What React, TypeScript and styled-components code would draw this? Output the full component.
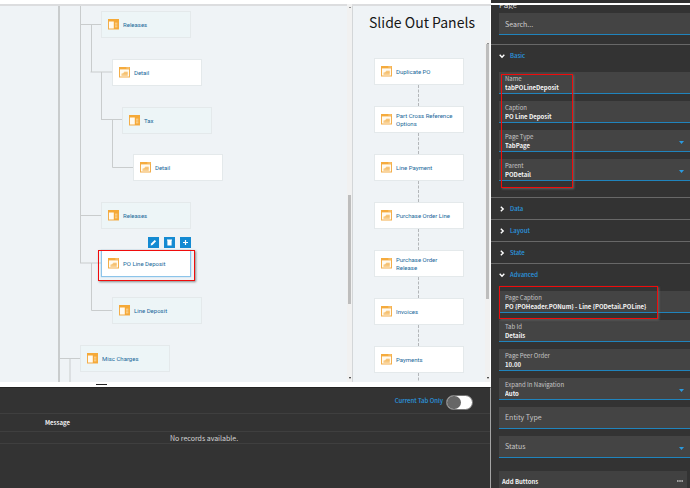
import React, { useState } from "react";
import styled, { createGlobalStyle, css } from "styled-components";

const sans = `"Noto Sans CJK SC", "Noto Sans", sans-serif`;

const GlobalStyle = createGlobalStyle`
  *, *::before, *::after { box-sizing: border-box; }
  body { margin: 0; background: #333; font-family: ${sans}; }
  button, input, select { font-family: inherit; }
`;

const Page = styled.div`
  display: flex;
  height: 100vh;
  overflow: hidden;
`;

const Main = styled.main`
  display: flex;
  flex: 1;
  flex-direction: column;
  min-width: 0;
`;

const Workspace = styled.div`
  display: flex;
  flex: 1;
  min-height: 0;
  border-top: 4px solid #fff;
  border-bottom: 5px solid #fff;
  background: #eff3f6;
  box-shadow: inset 0 2px 0 #dcdddf;
`;

const TreePane = styled.section`
  position: relative;
  flex: 1;
  min-width: 0;
  margin-top: 2px;
  overflow: hidden;
  background: #eff3f6;
`;

const Connectors = styled.svg`
  position: absolute;
  inset: 0;
`;

const Card = styled.a<{ $tint?: boolean; $selected?: boolean }>`
  display: flex;
  align-items: center;
  gap: 4px;
  width: 90px;
  height: 27px;
  padding: 0 5px 0 6px;
  border: 1px solid #e4e9eb;
  background: ${(p) => (p.$tint ? "#edf5f7" : "#fff")};
  color: #20699a;
  font: 400 6px/8px Roboto, sans-serif;
  text-decoration: none;
  ${(p) =>
    p.$selected &&
    css`
      border-color: #8cc4ea;
      box-shadow: 0 0 1px #8cc4ea;
    `}
  svg {
    flex: none;
  }
`;

const TreeNode = styled.div<{ $x: number; $y: number }>`
  position: absolute;
  left: ${(p) => p.$x}px;
  top: ${(p) => p.$y}px;
`;

const NodeActions = styled.div`
  position: absolute;
  right: 0;
  bottom: 29px;
  display: flex;
  gap: 5px;
`;

const NodeButton = styled.button`
  display: grid;
  place-items: center;
  width: 11px;
  height: 11px;
  padding: 0;
  border: 0;
  background: #148ad2;
`;

const Highlight = styled.div<{ $top: number; $left: number; $width: number; $height: number }>`
  position: absolute;
  z-index: 2;
  top: ${(p) => p.$top}px;
  left: ${(p) => p.$left}px;
  width: ${(p) => p.$width}px;
  height: ${(p) => p.$height}px;
  border: 1px solid #f00c0c;
  box-shadow: 1px 1px 2px rgba(110, 110, 110, 0.8);
  pointer-events: none;
`;

const ScrollTrack = styled.div`
  display: flex;
  flex: none;
  flex-direction: column;
  align-items: center;
  width: 5px;
  padding: 2px 0;
  background: #f1f1f1;
  &::before,
  &::after {
    content: "";
    border: 1px solid transparent;
  }
  &::before {
    border-bottom-color: #333;
  }
  &::after {
    border-top: 2px solid #222;
  }
`;

const ScrollThumb = styled.div<{ $size: number }>`
  width: 3px;
  flex: ${(p) => p.$size} 1 0;
  background: #bdbdbd;
`;

const Space = styled.div<{ $grow: number }>`
  flex: ${(p) => p.$grow} 1 0;
`;

const PanelsPane = styled.section`
  display: flex;
  flex: none;
  flex-direction: column;
  width: 139px;
  margin-top: 2px;
  border-left: 1px solid #d3d6d8;
  border-right: 1px solid #fff;
  overflow: hidden;
`;

const PanelsTitle = styled.h2`
  flex: none;
  margin: 0;
  padding: 4px 0 0 16px;
  height: 34px;
  color: #161616;
  font-size: 14px;
  font-weight: 400;
  line-height: 24px;
  white-space: nowrap;
`;

const PanelsBody = styled.div`
  display: flex;
  flex: 1;
  min-height: 0;
`;

const PanelList = styled.ul`
  display: flex;
  flex: 1;
  flex-direction: column;
  margin: 0;
  padding: 18px 0 0 21px;
  overflow: hidden;
  list-style: none;
`;

const PanelItem = styled.li`
  display: flex;
  flex: none;
  flex-direction: column;
  width: 90px;
`;

const Dash = styled.span`
  height: 21px;
  margin-left: 44px;
  border-left: 1px dashed #b3b6b9;
`;

const Console = styled.section`
  flex: none;
  height: 101px;
  border-top: 1px solid #242424;
  border-right: 1px solid #a5a5a5;
  background: #333;
  color: #d6d6d6;
`;

const ResizeGrip = styled.div`
  height: 0;
  margin-left: 96px;
  &::before {
    content: "";
    position: relative;
    top: -4px;
    display: block;
    width: 11px;
    height: 1px;
    background: #222;
  }
`;

const ConsoleBar = styled.div`
  display: flex;
  justify-content: flex-end;
  height: 25px;
  padding: 7px 17px 0 0;
`;

const ToggleLabel = styled.label`
  display: flex;
  gap: 3px;
  color: #2a9ae0;
  font-size: 6px;
  font-weight: 500;
  line-height: 12px;
`;

const Toggle = styled.input`
  appearance: none;
  display: flex;
  width: 27px;
  height: 15px;
  margin: 0;
  border: 1px solid #777;
  border-radius: 8px;
  background: #fff;
  &::before {
    content: "";
    width: 14px;
    height: 13px;
    border-radius: 7px;
    background: #666;
  }
  &:checked {
    justify-content: flex-end;
  }
`;

const MessageTable = styled.table`
  width: 100%;
  border-collapse: collapse;
  line-height: 10px;
  tr {
    border-top: 1px solid #3f3f3f;
  }
  th {
    height: 18px;
    padding: 0 0 0 45px;
    color: #f0f0f0;
    font-size: 6px;
    text-align: left;
  }
  td {
    height: 12px;
    padding: 0 82px 0 0;
    border-bottom: 1px solid #3f3f3f;
    font-size: 7px;
    text-align: center;
  }
`;

const Sidebar = styled.aside`
  display: flex;
  flex: none;
  flex-direction: column;
  width: 199px;
  overflow: hidden;
  border-top: 3px solid #303030;
  background: #333;
`;

const SidebarTitle = styled.div`
  display: flex;
  flex: none;
  align-items: flex-end;
  height: 6px;
  margin-bottom: 4px;
  padding-left: 8px;
  overflow: hidden;
  border-top: 2px solid #fff;
  color: #ddd;
  font-size: 8px;
  line-height: 9px;
`;

const SearchBox = styled.input`
  flex: none;
  height: 22px;
  margin: 0 0 9px 8px;
  padding: 0 6px;
  border: 0;
  border-bottom: 1px solid #2084bd;
  border-radius: 0;
  background: #444;
  color: #eee;
  font-size: 7px;
  &::placeholder {
    color: #d0d0d0;
  }
`;

const SectionHeader = styled.button`
  display: flex;
  flex: none;
  align-items: center;
  gap: 5px;
  width: 100%;
  height: 22px;
  padding: 0 0 0 8px;
  border: 0;
  border-top: 1px solid #686868;
  background: none;
  color: #2a9ae0;
  font-size: 6px;
  font-weight: 500;
  line-height: 10px;
`;

const Fields = styled.div<{ $padBottom: number }>`
  position: relative;
  display: flex;
  flex: none;
  flex-direction: column;
  gap: 7px;
  padding: 6px 0 ${(p) => p.$padBottom}px 8px;
`;

const Field = styled.label`
  display: flex;
  flex-direction: column;
  position: relative;
  height: 22px;
  padding: 3px 0 0 6px;
  border-bottom: 1px solid #2084bd;
  background: #444;
  color: #c6c6c6;
  font-size: 6px;
  line-height: 8px;
  > svg {
    position: absolute;
    right: 6px;
    top: 11px;
    pointer-events: none;
  }
`;

const control = css`
  appearance: none;
  display: block;
  width: 100%;
  height: 10px;
  margin: 0;
  padding: 0;
  border: 0;
  outline: 0;
  background: none;
  color: #f4f4f4;
  font-size: 6px;
  font-weight: 700;
  line-height: 10px;
`;

const TextInput = styled.input`
  ${control}
`;

const Select = styled.select`
  ${control}
`;

const EmptyName = styled.span`
  margin-top: 2px;
  height: 10px;
  font-size: 7px;
  line-height: 10px;
`;

const AddButtons = styled.button`
  display: flex;
  flex: none;
  align-items: center;
  justify-content: space-between;
  height: 20px;
  margin: 0 3px 0 8px;
  padding: 0 4px 0 3px;
  border: 0;
  background: #414141;
  color: #f0f0f0;
  font-size: 6px;
  font-weight: 700;
`;

const PageIcon = () => (
  <svg width="11" height="11" viewBox="0 0 11 11" aria-hidden="true">
    <rect x="0.5" y="0.5" width="10" height="9.5" fill="#fffaf0" stroke="#f3ae4b" />
    <path d="M0 0h11v2.4H0z" fill="#f5ab3d" />
    <path d="M7.6 1h1M9.3 1h1" stroke="#fff" strokeWidth="0.7" />
    <path d="M2.5 8.4V6.4l1.8-.4.7-1h3.7v3.4z" fill="#f8d08f" />
    <path d="M2.5 8.2h6.2M4.4 6.6h4.3M5.2 5.1h3.5" stroke="#f3b456" strokeWidth="0.6" />
  </svg>
);

const GridIcon = () => (
  <svg width="11" height="11" viewBox="0 0 11 11" aria-hidden="true">
    <rect x="0.5" y="0.5" width="10" height="9.5" fill="#fffaf0" stroke="#f3ae4b" />
    <path d="M0 0h11v2.6H0zM5.8 2h4.8v8H5.8z" fill="#f5a938" />
    <path d="M7 4.2h2.4M7 6h2.4M7 7.8h2.4" stroke="#fbd9a3" strokeWidth="1" />
  </svg>
);

const Chevron = ({ open }: { open?: boolean }) => (
  <svg width="6" height="6" viewBox="0 0 6 6" fill="none" stroke="#fff" strokeWidth="1.4" aria-hidden="true">
    <path d={open ? "M.7 1.8 3 4.2 5.3 1.8" : "M1.8.7 4.2 3 1.8 5.3"} />
  </svg>
);

const Caret = () => (
  <svg width="5" height="3" viewBox="0 0 5 3" aria-hidden="true">
    <path d="M0 0h5L2.5 3z" fill="#2a9ae0" />
  </svg>
);

type NodeData = { name: string; x: number; y: number; grid?: boolean; selected?: boolean };

const nodes: NodeData[] = [
  { name: "Releases", x: 101, y: 5, grid: true },
  { name: "Detail", x: 112, y: 53 },
  { name: "Tax", x: 122, y: 101, grid: true },
  { name: "Detail", x: 133, y: 148 },
  { name: "Releases", x: 101, y: 196, grid: true },
  { name: "PO Line Deposit", x: 101, y: 244, selected: true },
  { name: "Line Deposit", x: 112, y: 291, grid: true },
  { name: "Misc Charges", x: 80, y: 339, grid: true },
];

const panels = [
  "Duplicate PO",
  "Part Cross Reference Options",
  "Line Payment",
  "Purchase Order Line",
  "Purchase Order Release",
  "Invoices",
  "Payments",
];

type FieldData = { name: string; value?: string; select?: boolean };

const basicFields: FieldData[] = [
  { name: "Name", value: "tabPOLineDeposit" },
  { name: "Caption", value: "PO Line Deposit" },
  { name: "Page Type", value: "TabPage", select: true },
  { name: "Parent", value: "PODetail", select: true },
];

const advancedFields: FieldData[] = [
  { name: "Page Caption", value: "PO {POHeader.PONum} - Line {PODetail.POLine}" },
  { name: "Tab Id", value: "Details" },
  { name: "Page Peer Order", value: "10.00" },
  { name: "Expand In Navigation", value: "Auto", select: true },
  { name: "Entity Type" },
  { name: "Status", select: true },
];

const FieldRow = ({ name, value, select }: FieldData) => (
  <Field>
    {value ? name : <EmptyName>{name}</EmptyName>}
    {select ? (
      <Select defaultValue={value ?? ""}>
        <option value={value ?? ""}>{value ?? ""}</option>
      </Select>
    ) : (
      <TextInput defaultValue={value ?? ""} />
    )}
    {select && <Caret />}
  </Field>
);

const Scrollbar = ({ before, size, after }: { before: number; size: number; after: number }) => (
  <ScrollTrack>
    <Space $grow={before} />
    <ScrollThumb $size={size} />
    <Space $grow={after} />
  </ScrollTrack>
);

export default function App() {
  const [currentOnly, setCurrentOnly] = useState(false);
  return (
    <Page>
      <GlobalStyle />
      <Main>
        <Workspace>
          <TreePane>
            <Connectors width="100%" height="100%" fill="none" stroke="#c9cccd">
              <path d="M59 0V400" strokeWidth="2" />
              <path d="M80.5 0V257M80.5 18.5H101M91.5 18.5V66M90.5 66H112M101.5 66V113.5M101 113.5H122M112.5 113.5V161.5H133M80.5 209.5H101M80 257H101M91.5 257V304.5H112M60 352.5H80M70 352.5V400" />
            </Connectors>
            {nodes.map((n, i) => (
              <TreeNode key={i} $x={n.x} $y={n.y}>
                <Card href="#" $tint={n.grid} $selected={n.selected}>
                  {n.grid ? <GridIcon /> : <PageIcon />}
                  {n.name}
                </Card>
                {n.selected && (
                  <>
                    <NodeActions>
                      <NodeButton aria-label="Edit">
                        <svg width="7" height="7" viewBox="0 0 7 7">
                          <path d="M.6 6.4l.5-1.9L4.7.9l1.4 1.4-3.6 3.6z" fill="#fff" />
                        </svg>
                      </NodeButton>
                      <NodeButton aria-label="Delete">
                        <svg width="7" height="7" viewBox="0 0 7 7">
                          <path d="M1 .5h5v1H1zM1.4 1.5h4.2v5H1.4z" fill="#fff" />
                        </svg>
                      </NodeButton>
                      <NodeButton aria-label="Add">
                        <svg width="7" height="7" viewBox="0 0 7 7">
                          <path d="M1 3.5h5M3.5 1v5" stroke="#fff" strokeWidth="1.2" />
                        </svg>
                      </NodeButton>
                    </NodeActions>
                    <Highlight $top={0} $left={-3} $width={97} $height={31} />
                  </>
                )}
              </TreeNode>
            ))}
          </TreePane>
          <Scrollbar before={186} size={109} after={73} />
          <PanelsPane>
            <PanelsTitle>Slide Out Panels</PanelsTitle>
            <PanelsBody>
              <PanelList>
                {panels.map((name) => (
                  <PanelItem key={name}>
                    <Card href="#">
                      <PageIcon />
                      {name}
                    </Card>
                    <Dash />
                  </PanelItem>
                ))}
              </PanelList>
              <Scrollbar before={0} size={256} after={78} />
            </PanelsBody>
          </PanelsPane>
        </Workspace>
        <Console>
          <ResizeGrip />
          <ConsoleBar>
            <ToggleLabel>
              Current Tab Only
              <Toggle
                type="checkbox"
                role="switch"
                checked={currentOnly}
                onChange={(e) => setCurrentOnly(e.target.checked)}
              />
            </ToggleLabel>
          </ConsoleBar>
          <MessageTable>
            <thead>
              <tr>
                <th>Message</th>
              </tr>
            </thead>
            <tbody>
              <tr>
                <td>No records available.</td>
              </tr>
            </tbody>
          </MessageTable>
        </Console>
      </Main>
      <Sidebar>
        <SidebarTitle>Page</SidebarTitle>
        <SearchBox aria-label="Search" placeholder="Search..." />
        <SectionHeader>
          <Chevron open />
          Basic
        </SectionHeader>
        <Fields $padBottom={16}>
          {basicFields.map((f) => (
            <FieldRow key={f.name} {...f} />
          ))}
          <Highlight $top={8} $left={10} $width={72} $height={114} />
        </Fields>
        {["Data", "Layout", "State"].map((name) => (
          <SectionHeader key={name}>
            <Chevron />
            {name}
          </SectionHeader>
        ))}
        <SectionHeader>
          <Chevron open />
          Advanced
        </SectionHeader>
        <Fields $padBottom={13}>
          {advancedFields.map((f) => (
            <FieldRow key={f.name} {...f} />
          ))}
          <Highlight $top={1} $left={8} $width={159} $height={33} />
        </Fields>
        <AddButtons>
          Add Buttons
          <svg width="6" height="2" viewBox="0 0 6 2" aria-hidden="true">
            <path d="M0 1h1.6M2.2 1h1.6M4.4 1H6" stroke="#fff" strokeWidth="1.2" />
          </svg>
        </AddButtons>
      </Sidebar>
    </Page>
  );
}
